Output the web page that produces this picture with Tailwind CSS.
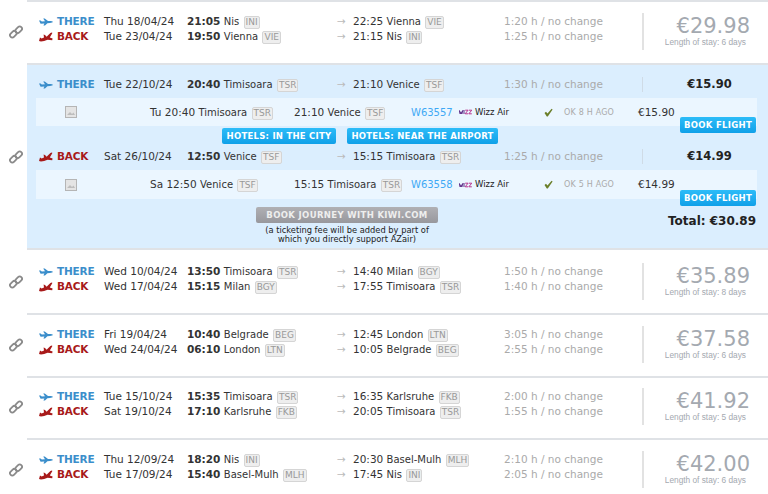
<!DOCTYPE html>
<html lang="en">
<head>
    <meta charset="UTF-8">
    <title>Flights</title>
    <script src="https://cdn.jsdelivr.net/npm/@tailwindcss/browser@4"></script>
</head>
<body class="bg-white font-['DejaVu_Sans',sans-serif] text-[10.5px] leading-[15px] text-[#333] overflow-hidden">
    <svg class="hidden">
        <symbol id="link" viewBox="0 0 14 14"><g fill="none" stroke="#8a8a8a" stroke-width="1.8"><rect x="0.6" y="6.9" width="7.4" height="4.6" rx="2.3" transform="rotate(-45 4.3 9.2)"/><rect x="6" y="2.5" width="7.4" height="4.6" rx="2.3" transform="rotate(-45 9.7 4.8)"/></g></symbol>
        <symbol id="there" viewBox="0 0 14 8"><path d="M0 2.6 L1.6 2.6 L2.8 3.4 L6 3.2 L4.2 0.4 L5.8 0.4 L9 3 L12 3 Q14 3.4 14 4 Q13.6 4.7 11 5 L8.4 5.2 L6 7.6 L4.4 7.6 L5.4 5.6 L1.6 5.8 Z" fill="#3b8ecb"/></symbol>
        <symbol id="back" viewBox="0 0 14 10"><path d="M0 9 L1 5.6 L2.6 6.4 L5 5.6 L4.6 2.6 L6 3 L7.6 4.8 L11.4 1 Q13.2 0 13.4 1 L10.8 5.4 L13.6 6.4 L13.2 8.2 L8.6 7.8 Q5 9.6 2 9.6 Z" fill="#a81a1a"/></symbol>
        <symbol id="thumb" viewBox="0 0 12 12"><rect x="0.5" y="0.5" width="11" height="11" fill="#e4e4e4" stroke="#b5b5b5"/><path d="M2 9 L5 6 L7 8 L8.5 6.5 L10 9 Z" fill="#bdbdbd"/></symbol>
        <symbol id="check" viewBox="0 0 9 9"><path d="M0.5 5 L2 3.8 L3.5 5.6 L7.6 0.8 L8.6 1.4 L3.8 8.6 L2.8 8.6 Z" fill="#6b7f2a"/></symbol>
        <symbol id="wizz" viewBox="0 0 13 6"><path d="M0 1 L1.2 5 L2 2.6 L2.8 5 L4 1 M5 1 V5" fill="none" stroke="#5b2a86" stroke-width="1"/><path d="M6.2 1.2 H9 L6.2 4.8 H9 M9.8 1.2 H12.8 L9.8 4.8 H12.8" fill="none" stroke="#b8368f" stroke-width="1"/></symbol>
    </svg>
    <div id="list"></div>

    <script>
        function badge(code) {
            return `<span class="inline-block bg-[#eee] border border-[#d5d5d5] rounded-[2px] text-[#999] text-[9px] leading-[9px] px-[1px] py-[1px] ml-[1px]">${code}</span>`;
        }

        function city(name) {
            return `<span class="text-[10px]">${name}</span>`;
        }

        function leg(kind, l) {
            const icon = kind === 'there'
                ? '<svg class="w-[14px] h-[8px]"><use href="#there"/></svg><span class="font-bold text-[#3b8ecb] tracking-[-0.2px]">THERE</span>'
                : '<svg class="w-[14px] h-[10px]"><use href="#back"/></svg><span class="font-bold text-[#a81a1a] tracking-[-0.2px]">BACK</span>';
            return `<div class="grid grid-cols-[18px_47px_83px_150px_16px_151px_138px] items-center h-[15px]">
                ${icon}
                <span>${l[0]}</span>
                <span><b>${l[1]}</b> ${city(l[2])} ${badge(l[3])}</span>
                <span class="text-[#bbb]">→</span>
                <span>${l[4]} ${city(l[5])} ${badge(l[6])}</span>
                <span class="text-[#aaa]">${l[7]}</span>
            </div>`;
        }

        function linkCol() {
            return '<div class="w-[27px] flex items-center justify-center pl-[5px]"><svg class="w-[14px] h-[14px]"><use href="#link"/></svg></div>';
        }

        function row(r) {
            return `<div class="flex ${r.h}">
                ${linkCol()}
                <div class="flex-1 flex border-t-2 ${r.line} pl-[12px] ${r.pt}">
                    <div class="w-[603px]">${leg('there', r.there)}${leg('back', r.back)}</div>
                    <div class="w-[108px] h-[37px] border-l-2 border-[#e2e2e2] text-right -mt-[1px] pt-[1px]">
                        <div class="text-[21px] leading-[24px] text-[#a4a9b0]">${r.price}</div>
                        <div class="text-[8.3px] leading-[10px] -mt-[1px] text-[#a4a9b0] font-['Liberation_Sans',sans-serif] pr-[4px]">Length of stay: ${r.stay} days</div>
                    </div>
                </div>
            </div>`;
        }

        function segment(s) {
            return `<div class="relative ml-[9px] mr-[11px] ${s.h} bg-[#ebf6ff] flex items-center">
                <svg class="w-[12px] h-[12px] ml-[29px]"><use href="#thumb"/></svg>
                <span class="ml-[73px] w-[144px] whitespace-nowrap">${s.dep} ${city(s.from)} ${badge(s.fromCode)}</span>
                <span class="w-[117px] whitespace-nowrap">${s.arr} ${city(s.to)} ${badge(s.toCode)}</span>
                <span class="w-[48px] text-[10px] text-[#3fa9f5]">${s.flight}</span>
                <svg class="w-[13px] h-[6px]"><use href="#wizz"/></svg>
                <span class="ml-[3px] w-[69px] text-[8.5px] text-[#222]">Wizz Air</span>
                <svg class="w-[9px] h-[9px]"><use href="#check"/></svg>
                <span class="ml-[11px] w-[74px] text-[8px] text-[#aaa] tracking-[0.2px]">${s.ok}</span>
                <span>${s.price}</span>
                <a class="absolute right-[1px] ${s.top} w-[76px] h-[16px] bg-linear-to-b from-[#2cbcf8] to-[#0fa0e8] rounded-[2px] text-white font-bold text-[8.5px] leading-[16px] text-center tracking-[0.3px]">BOOK FLIGHT</a>
            </div>`;
        }

        const hotels = 'bg-linear-to-b from-[#2cbcf8] to-[#0fa0e8] rounded-[2px] text-white font-bold text-[8.5px] leading-[16px] text-center tracking-[0.25px] whitespace-nowrap';
        const subPrice = 'w-[108px] h-[15px] border-l border-[#cfdbe6] text-center font-bold text-[#222] text-[11.5px] pl-[26px]';

        const expanded = `<div class="flex h-[187px]">
            ${linkCol()}
            <div class="flex-1 bg-[#dbeefe] border-t-2 border-b-2 border-[#dfe2e6] pt-[12px]">
                <div class="flex pl-[12px] h-[21px]">
                    <div class="w-[603px]">${leg('there', ['Tue 22/10/24', '20:40', 'Timisoara', 'TSR', '21:10', 'Venice', 'TSF', '1:30 h / no change'])}</div>
                    <div class="${subPrice}">€15.90</div>
                </div>
                ${segment({ h: 'h-[28px]', dep: 'Tu 20:40', from: 'Timisoara', fromCode: 'TSR', arr: '21:10', to: 'Venice', toCode: 'TSF', flight: 'W63557', ok: 'OK 8 H AGO', price: '€15.90', top: 'top-[19px]' })}
                <div class="flex gap-[11px] pl-[195px] mt-[2px] h-[16px]">
                    <a class="w-[114px] ${hotels}">HOTELS: IN THE CITY</a>
                    <a class="w-[151px] ${hotels}">HOTELS: NEAR THE AIRPORT</a>
                </div>
                <div class="flex pl-[12px] mt-[5px] h-[21px]">
                    <div class="w-[603px]">${leg('back', ['Sat 26/10/24', '12:50', 'Venice', 'TSF', '15:15', 'Timisoara', 'TSR', '1:25 h / no change'])}</div>
                    <div class="${subPrice}">€14.99</div>
                </div>
                ${segment({ h: 'h-[29px]', dep: 'Sa 12:50', from: 'Venice', fromCode: 'TSF', arr: '15:15', to: 'Timisoara', toCode: 'TSR', flight: 'W63558', ok: 'OK 5 H AGO', price: '€14.99', top: 'top-[20px]' })}
                <div class="flex mt-[8px]">
                    <div class="ml-[229px] w-[182px] text-center">
                        <a class="block h-[16px] bg-linear-to-b from-[#b0b0b4] to-[#98989d] rounded-[2px] text-[#eee] font-bold text-[8.5px] leading-[16px] tracking-[0.35px]">BOOK JOURNEY WITH KIWI.COM</a>
                        <p class="text-[8.3px] leading-[9px] text-[#222] mt-[3px]">(a ticketing fee will be added by part of which you directly support AZair)</p>
                    </div>
                    <div class="ml-[230px] pt-[7px] font-bold text-[#222] text-[12px]">Total: €30.89</div>
                </div>
            </div>
        </div>`;

        const rows = [
            { h: 'h-[63px]', line: 'border-[#dfe2e6]', pt: 'pt-[12px]', price: '€29.98', stay: 6,
              there: ['Thu 18/04/24', '21:05', 'Nis', 'INI', '22:25', 'Vienna', 'VIE', '1:20 h / no change'],
              back: ['Tue 23/04/24', '19:50', 'Vienna', 'VIE', '21:15', 'Nis', 'INI', '1:25 h / no change'] },
            { h: 'h-[63px]', line: 'border-transparent', pt: 'pt-[12px]', price: '€35.89', stay: 8,
              there: ['Wed 10/04/24', '13:50', 'Timisoara', 'TSR', '14:40', 'Milan', 'BGY', '1:50 h / no change'],
              back: ['Wed 17/04/24', '15:15', 'Milan', 'BGY', '17:55', 'Timisoara', 'TSR', '1:40 h / no change'] },
            { h: 'h-[63px]', line: 'border-[#dfe2e6]', pt: 'pt-[12px]', price: '€37.58', stay: 6,
              there: ['Fri 19/04/24', '10:40', 'Belgrade', 'BEG', '12:45', 'London', 'LTN', '3:05 h / no change'],
              back: ['Wed 24/04/24', '06:10', 'London', 'LTN', '10:05', 'Belgrade', 'BEG', '2:55 h / no change'] },
            { h: 'h-[62px]', line: 'border-[#dfe2e6]', pt: 'pt-[11px]', price: '€41.92', stay: 5,
              there: ['Tue 15/10/24', '15:35', 'Timisoara', 'TSR', '16:35', 'Karlsruhe', 'FKB', '2:00 h / no change'],
              back: ['Sat 19/10/24', '17:10', 'Karlsruhe', 'FKB', '20:05', 'Timisoara', 'TSR', '1:55 h / no change'] },
            { h: 'h-[63px]', line: 'border-[#dfe2e6]', pt: 'pt-[12px]', price: '€42.00', stay: 6,
              there: ['Thu 12/09/24', '18:20', 'Nis', 'INI', '20:30', 'Basel-Mulh', 'MLH', '2:10 h / no change'],
              back: ['Tue 17/09/24', '15:40', 'Basel-Mulh', 'MLH', '17:45', 'Nis', 'INI', '2:05 h / no change'] },
        ];

        document.getElementById('list').innerHTML = row(rows[0]) + expanded + rows.slice(1).map(row).join('');
    </script>
</body>
</html>
